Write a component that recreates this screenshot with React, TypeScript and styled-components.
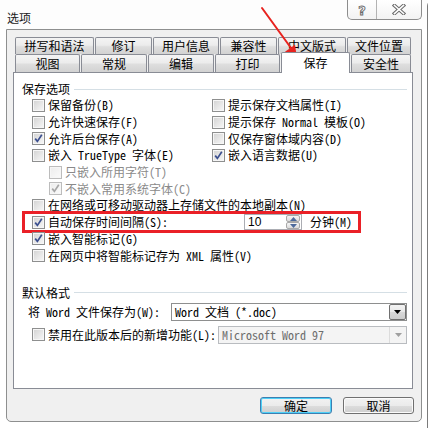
import React from 'react';
import styled, { createGlobalStyle, css } from 'styled-components';

const FONT = `"Noto Sans Mono CJK SC", "Liberation Mono", "Noto Sans CJK SC", monospace`;

const Global = createGlobalStyle`
  html, body { margin: 0; padding: 0; background: #ffffff; }
  body {
    width: 430px; height: 428px; overflow: hidden;
    font-family: ${FONT};
    font-size: 12px; color: #000;
  }
  * { box-sizing: border-box; }
`;

const Window = styled.div`
  position: relative;
  width: 428px;
  height: 428px;
  border-right: 1px solid #7b7b7b;
  border-top-right-radius: 6px;
`;

const TitleBar = styled.div`
  height: 29px;
  display: flex;
  align-items: flex-start;
  background: #fdfdfd;
`;

const Title = styled.div`
  padding: 12px 0 0 7px;
  font-family: "Noto Sans CJK SC", sans-serif;
  font-size: 12px;
  line-height: 12px;
  color: #1a1a1a;
`;

const CaptionButtons = styled.div`
  margin-left: auto;
  margin-right: 5px;
  width: 75px;
  height: 20px;
  display: flex;
  border: 1px solid #8d8d8d;
  border-top: none;
  border-radius: 0 0 5px 5px;
  background: linear-gradient(#ffffff, #f3f3f3);
`;

const CapBtn = styled.div<{ $w?: number }>`
  width: ${p => (p.$w ? `${p.$w}px` : 'auto')};
  flex: ${p => (p.$w ? '0 0 auto' : '1')};
  display: flex;
  align-items: center;
  justify-content: center;
  & + & { border-left: 1px solid #b3b3b3; }
`;

const Client = styled.div`
  margin-left: 6px;
  width: 416px;
  height: 393px;
  border: 1px solid #8e8f8f;
  border-radius: 0 0 5px 5px;
  background: #f0f0f0;
  padding: 7px 0 0 6px;
`;

const TabsArea = styled.div`
  width: 400px;
`;

const TabRow = styled.div<{ $h: number }>`
  display: flex;
  gap: 1px;
  padding-left: 2px;
  height: ${p => p.$h}px;
  align-items: flex-end;
`;

const Tab = styled.div<{ $w: number; $sel?: boolean }>`
  width: ${p => p.$w}px;
  height: 100%;
  flex: 0 0 auto;
  display: flex;
  align-items: center;
  justify-content: center;
  border: 1px solid #898c95;
  border-bottom: none;
  border-radius: 2px 2px 0 0;
  background: linear-gradient(#f4f4f4 0%, #ececec 45%, #dedede 55%, #d2d2d2 100%);
  font-size: 12px;
  line-height: 12px;
  white-space: nowrap;
  ${p =>
    p.$sel &&
    css`
      position: relative;
      z-index: 2;
      height: 21px;
      margin-bottom: -1px;
      background: #ffffff;
      padding-bottom: 1px;
    `}
`;

const Panel = styled.div`
  width: 400px;
  height: 317px;
  border: 1px solid #898c95;
  background: #ffffff;
  padding: 8px 5px 0 8px;
`;

const SectionHeader = styled.div<{ $mt?: number }>`
  display: flex;
  align-items: center;
  gap: 4px;
  height: 16px;
  margin-top: ${p => p.$mt ?? 0}px;
  line-height: 12px;
  &::after {
    content: '';
    flex: 1;
    height: 1px;
    background: #d5dfe5;
  }
`;

const OptionsGrid = styled.div`
  display: grid;
  grid-template-columns: 180px 1fr;
  grid-auto-rows: 16.7px;
  margin-left: 10px;
`;

const CheckRow = styled.div<{ $indent?: number; $disabled?: boolean; $full?: boolean }>`
  position: relative;
  display: flex;
  align-items: center;
  gap: 3px;
  padding-left: ${p => p.$indent ?? 0}px;
  white-space: nowrap;
  line-height: 12px;
  color: ${p => (p.$disabled ? '#8a8a8a' : '#000')};
  ${p => p.$full && css`grid-column: 1 / -1;`}
`;

const Box = styled.span<{ $disabled?: boolean }>`
  flex: 0 0 13px;
  width: 13px;
  height: 13px;
  display: flex;
  align-items: center;
  justify-content: center;
  border: 1px solid ${p => (p.$disabled ? '#bcbcbc' : '#8e8f8f')};
  box-shadow: inset 0 0 0 1px #f6f6f6;
  background: ${p =>
    p.$disabled
      ? 'linear-gradient(135deg, #ececec, #fafafa)'
      : 'linear-gradient(135deg, #d2d2d2, #f8f8f8)'};
`;

const Check: React.FC<{ checked?: boolean; disabled?: boolean }> = ({ checked, disabled }) => (
  <Box $disabled={disabled}>
    {checked && (
      <svg width="11" height="11" viewBox="0 0 11 11">
        <path
          d="M2.2 5.6 L4.4 8.4 L8.8 1.8"
          fill="none"
          stroke={disabled ? '#a6a6a6' : '#3b4f8f'}
          strokeWidth="1.7"
        />
      </svg>
    )}
  </Box>
);

const FixedLabel = styled.span<{ $w: number }>`
  flex: 0 0 ${p => p.$w}px;
  width: ${p => p.$w}px;
`;

const Spinner = styled.div`
  display: flex;
  width: 58px;
  height: 16px;
  border: 1px solid #abadb3;
  background: #fff;
`;

const SpinText = styled.span`
  flex: 1;
  padding-left: 3px;
  font-family: "Liberation Sans", sans-serif;
  font-size: 12px;
  line-height: 14px;
`;

const SpinButtons = styled.div`
  width: 15px;
  display: flex;
  flex-direction: column;
  gap: 0;
  padding: 0 1px 0 0;
`;

const SpinBtn = styled.div`
  flex: 1;
  display: flex;
  align-items: center;
  justify-content: center;
  border: 1px solid #a9a9a9;
  border-radius: 2px;
  background: linear-gradient(#f6f6f6, #dcdcdc);
`;

const Minutes = styled.span`
  margin-left: 5px;
`;

const Annotation = styled.div`
  position: absolute;
  left: -10px;
  top: -3px;
  width: 339px;
  height: 22px;
  border: 3px solid #ea2027;
  pointer-events: none;
`;

const FieldRow = styled.div<{ $mt: number; $indent: number }>`
  display: flex;
  align-items: center;
  gap: 3px;
  height: 18px;
  margin-top: ${p => p.$mt}px;
  padding-left: ${p => p.$indent}px;
  white-space: nowrap;
  line-height: 12px;
`;

const Combo = styled.div<{ $w: number; $disabled?: boolean }>`
  display: flex;
  align-items: stretch;
  width: ${p => p.$w}px;
  height: 18px;
  border: 1px solid ${p => (p.$disabled ? '#b9bcc0' : '#8e8f8f')};
  background: ${p => (p.$disabled ? '#f4f4f4' : '#ffffff')};
  color: ${p => (p.$disabled ? '#6d6d6d' : '#000')};
`;

const ComboText = styled.span`
  flex: 1;
  padding-left: 3px;
  display: flex;
  align-items: center;
  line-height: 12px;
`;

const DropBtn = styled.div<{ $disabled?: boolean }>`
  width: 17px;
  display: flex;
  align-items: center;
  justify-content: center;
  ${p =>
    p.$disabled
      ? css`
          border-left: 1px solid #dcdcdc;
        `
      : css`
          border: 1px solid #707070;
          border-radius: 2px;
          background: linear-gradient(#f3f3f3 0%, #e8e8e8 50%, #d8d8d8 51%, #cdcdcd 100%);
        `}
`;

const Footer = styled.div`
  display: flex;
  justify-content: flex-end;
  gap: 11px;
  padding: 8px 7px 0 0;
`;

const Button = styled.div<{ $w: number; $primary?: boolean }>`
  width: ${p => p.$w}px;
  height: 17px;
  display: flex;
  align-items: center;
  justify-content: center;
  border: 1px solid ${p => (p.$primary ? '#3c7fb1' : '#707070')};
  border-radius: 3px;
  background: linear-gradient(#f2f2f2 0%, #ebebeb 50%, #dddddd 51%, #cfcfcf 100%);
  box-shadow: ${p => (p.$primary ? 'inset 0 0 0 1px #4ed0f7' : 'inset 0 0 0 1px #fbfbfb')};
  line-height: 12px;
`;

const ArrowOverlay = styled.svg`
  position: absolute;
  left: 0;
  top: 0;
  pointer-events: none;
`;

const row1 = [
  { t: '拼写和语法', w: 79 },
  { t: '修订', w: 57 },
  { t: '用户信息', w: 66 },
  { t: '兼容性', w: 57 },
  { t: '中文版式', w: 68 },
  { t: '文件位置', w: 64 },
];
const row2 = [
  { t: '视图', w: 65 },
  { t: '常规', w: 66 },
  { t: '编辑', w: 66 },
  { t: '打印', w: 65 },
  { t: '保存', w: 69, sel: true },
  { t: '安全性', w: 60 },
];

const Tri: React.FC<{ up?: boolean; color: string; w?: number; h?: number }> = ({ up, color, w = 7, h = 4 }) => (
  <svg width={w} height={h} viewBox={`0 0 ${w} ${h}`}>
    <polygon points={up ? `0,${h} ${w},${h} ${w / 2},0` : `0,0 ${w},0 ${w / 2},${h}`} fill={color} />
  </svg>
);

export default function App() {
  return (
    <>
      <Global />
      <Window>
        <TitleBar>
          <Title>选项</Title>
          <CaptionButtons>
            <CapBtn $w={28}>
              <svg width="12" height="14" viewBox="0 0 12 14">
                <text x="6" y="12" textAnchor="middle" fontFamily="DejaVu Sans, sans-serif" fontWeight="bold"
                  fontSize="13" fill="#ffffff" stroke="#6a6a6a" strokeWidth="0.9">?</text>
              </svg>
            </CapBtn>
            <CapBtn>
              <svg width="14" height="11" viewBox="0 0 14 11">
                <path d="M2.5 1.5 L11.5 9.5 M11.5 1.5 L2.5 9.5" stroke="#6a6a6a" strokeWidth="3.6" strokeLinecap="square" />
                <path d="M2.5 1.5 L11.5 9.5 M11.5 1.5 L2.5 9.5" stroke="#ffffff" strokeWidth="1.6" strokeLinecap="square" />
              </svg>
            </CapBtn>
          </CaptionButtons>
        </TitleBar>
        <Client>
          <TabsArea>
            <TabRow $h={17}>
              {row1.map(t => (
                <Tab key={t.t} $w={t.w}>{t.t}</Tab>
              ))}
            </TabRow>
            <TabRow $h={18}>
              {row2.map(t => (
                <Tab key={t.t} $w={t.w} $sel={t.sel}>{t.t}</Tab>
              ))}
            </TabRow>
            <Panel>
              <SectionHeader>保存选项</SectionHeader>
              <OptionsGrid>
                <CheckRow><Check />保留备份(B)</CheckRow>
                <CheckRow><Check />提示保存文档属性(I)</CheckRow>
                <CheckRow><Check />允许快速保存(F)</CheckRow>
                <CheckRow><Check />提示保存 Normal 模板(O)</CheckRow>
                <CheckRow><Check checked />允许后台保存(A)</CheckRow>
                <CheckRow><Check />仅保存窗体域内容(D)</CheckRow>
                <CheckRow><Check />嵌入 TrueType 字体(E)</CheckRow>
                <CheckRow><Check checked />嵌入语言数据(U)</CheckRow>
                <CheckRow $full $indent={17} $disabled><Check disabled />只嵌入所用字符(T)</CheckRow>
                <CheckRow $full $indent={17} $disabled><Check disabled checked />不嵌入常用系统字体(C)</CheckRow>
                <CheckRow $full><Check />在网络或可移动驱动器上存储文件的本地副本(N)</CheckRow>
                <CheckRow $full>
                  <Check checked />
                  <FixedLabel $w={193}>自动保存时间间隔(S):</FixedLabel>
                  <Spinner>
                    <SpinText>10</SpinText>
                    <SpinButtons>
                      <SpinBtn><Tri up color="#4d6a9c" /></SpinBtn>
                      <SpinBtn><Tri color="#4d6a9c" /></SpinBtn>
                    </SpinButtons>
                  </Spinner>
                  <Minutes>分钟(M)</Minutes>
                  <Annotation />
                </CheckRow>
                <CheckRow $full><Check checked />嵌入智能标记(G)</CheckRow>
                <CheckRow $full><Check />在网页中将智能标记存为 XML 属性(V)</CheckRow>
              </OptionsGrid>
              <SectionHeader $mt={21}>默认格式</SectionHeader>
              <FieldRow $mt={2} $indent={6}>
                <FixedLabel $w={140}>将 Word 文件保存为(W):</FixedLabel>
                <Combo $w={236}>
                  <ComboText>Word 文档 (*.doc)</ComboText>
                  <DropBtn><Tri color="#000" /></DropBtn>
                </Combo>
              </FieldRow>
              <FieldRow $mt={5} $indent={10}>
                <Check />
                <FixedLabel $w={167}>禁用在此版本后的新增功能(L):</FixedLabel>
                <Combo $w={189} $disabled>
                  <ComboText>Microsoft Word 97</ComboText>
                  <DropBtn $disabled><Tri color="#a0a0a0" /></DropBtn>
                </Combo>
              </FieldRow>
            </Panel>
          </TabsArea>
          <Footer>
            <Button $w={72} $primary>确定</Button>
            <Button $w={71}>取消</Button>
          </Footer>
        </Client>
        <ArrowOverlay width="430" height="80" viewBox="0 0 430 80">
          <path d="M262 8 L291 48" stroke="#e8231f" strokeWidth="2" strokeLinecap="round" />
          <polygon points="297,58 285,51.8 295,44.8" fill="#e8231f" />
        </ArrowOverlay>
      </Window>
    </>
  );
}
